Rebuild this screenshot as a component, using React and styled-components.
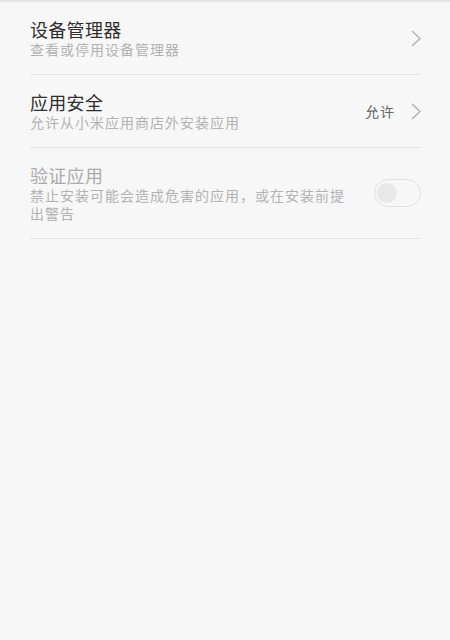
import React from "react"
import styled, { createGlobalStyle } from "styled-components"

const GlobalStyle = createGlobalStyle`
	html, body {
		margin: 0;
		padding: 0;
		background: #f7f7f7;
	}
	body {
		font-family: "Noto Sans CJK SC", "Noto Sans", sans-serif;
	}
`

const Page = styled.div`
	width: 450px;
	min-height: 640px;
	background: #f7f7f7;
	border-top: 2px solid #e4e4e4;
	box-sizing: border-box;
`

const List = styled.div`
	margin: 0 29px 0 30px;
`

const Row = styled.div`
	display: flex;
	align-items: center;
	padding: 16.5px 0;
	border-bottom: 1px solid #e3e3e3;
`

const Text = styled.div`
	flex: 1;
	min-width: 0;
`

const Title = styled.div`
	font-size: 18px;
	line-height: 21px;
	letter-spacing: 0.3px;
	color: ${p => (p.disabled ? "#ababab" : "#2e2e2e")};
`

const Desc = styled.div`
	font-size: 14px;
	line-height: 18px;
	letter-spacing: 1px;
	color: #b2b2b2;
	max-width: 322px;
`

const Value = styled.span`
	font-size: 14px;
	letter-spacing: 1px;
	color: #666;
	margin-right: 16px;
`

const Toggle = styled.div`
	width: 47px;
	height: 28px;
	box-sizing: border-box;
	border: 1px solid #e0e0e0;
	border-radius: 14px;
	padding: 0 2px;
	display: flex;
	align-items: center;
	flex-shrink: 0;
`

const Knob = styled.div`
	width: 20px;
	height: 20px;
	border-radius: 50%;
	background: #e8e8e8;
`

const Chevron = () => (
	<svg width="10" height="17" viewBox="0 0 10 17" style={{ flexShrink: 0 }}>
		<polyline points="1,1 9,8.5 1,16" fill="none" stroke="#aeaeae" strokeWidth="1.3" />
	</svg>
)

export default function App() {
	return (
		<Page>
			<GlobalStyle />
			<List>
				<Row>
					<Text>
						<Title>设备管理器</Title>
						<Desc>查看或停用设备管理器</Desc>
					</Text>
					<Chevron />
				</Row>
				<Row>
					<Text>
						<Title>应用安全</Title>
						<Desc>允许从小米应用商店外安装应用</Desc>
					</Text>
					<Value>允许</Value>
					<Chevron />
				</Row>
				<Row>
					<Text>
						<Title disabled>验证应用</Title>
						<Desc>禁止安装可能会造成危害的应用，或在安装前提出警告</Desc>
					</Text>
					<Toggle>
						<Knob />
					</Toggle>
				</Row>
			</List>
		</Page>
	)
}
